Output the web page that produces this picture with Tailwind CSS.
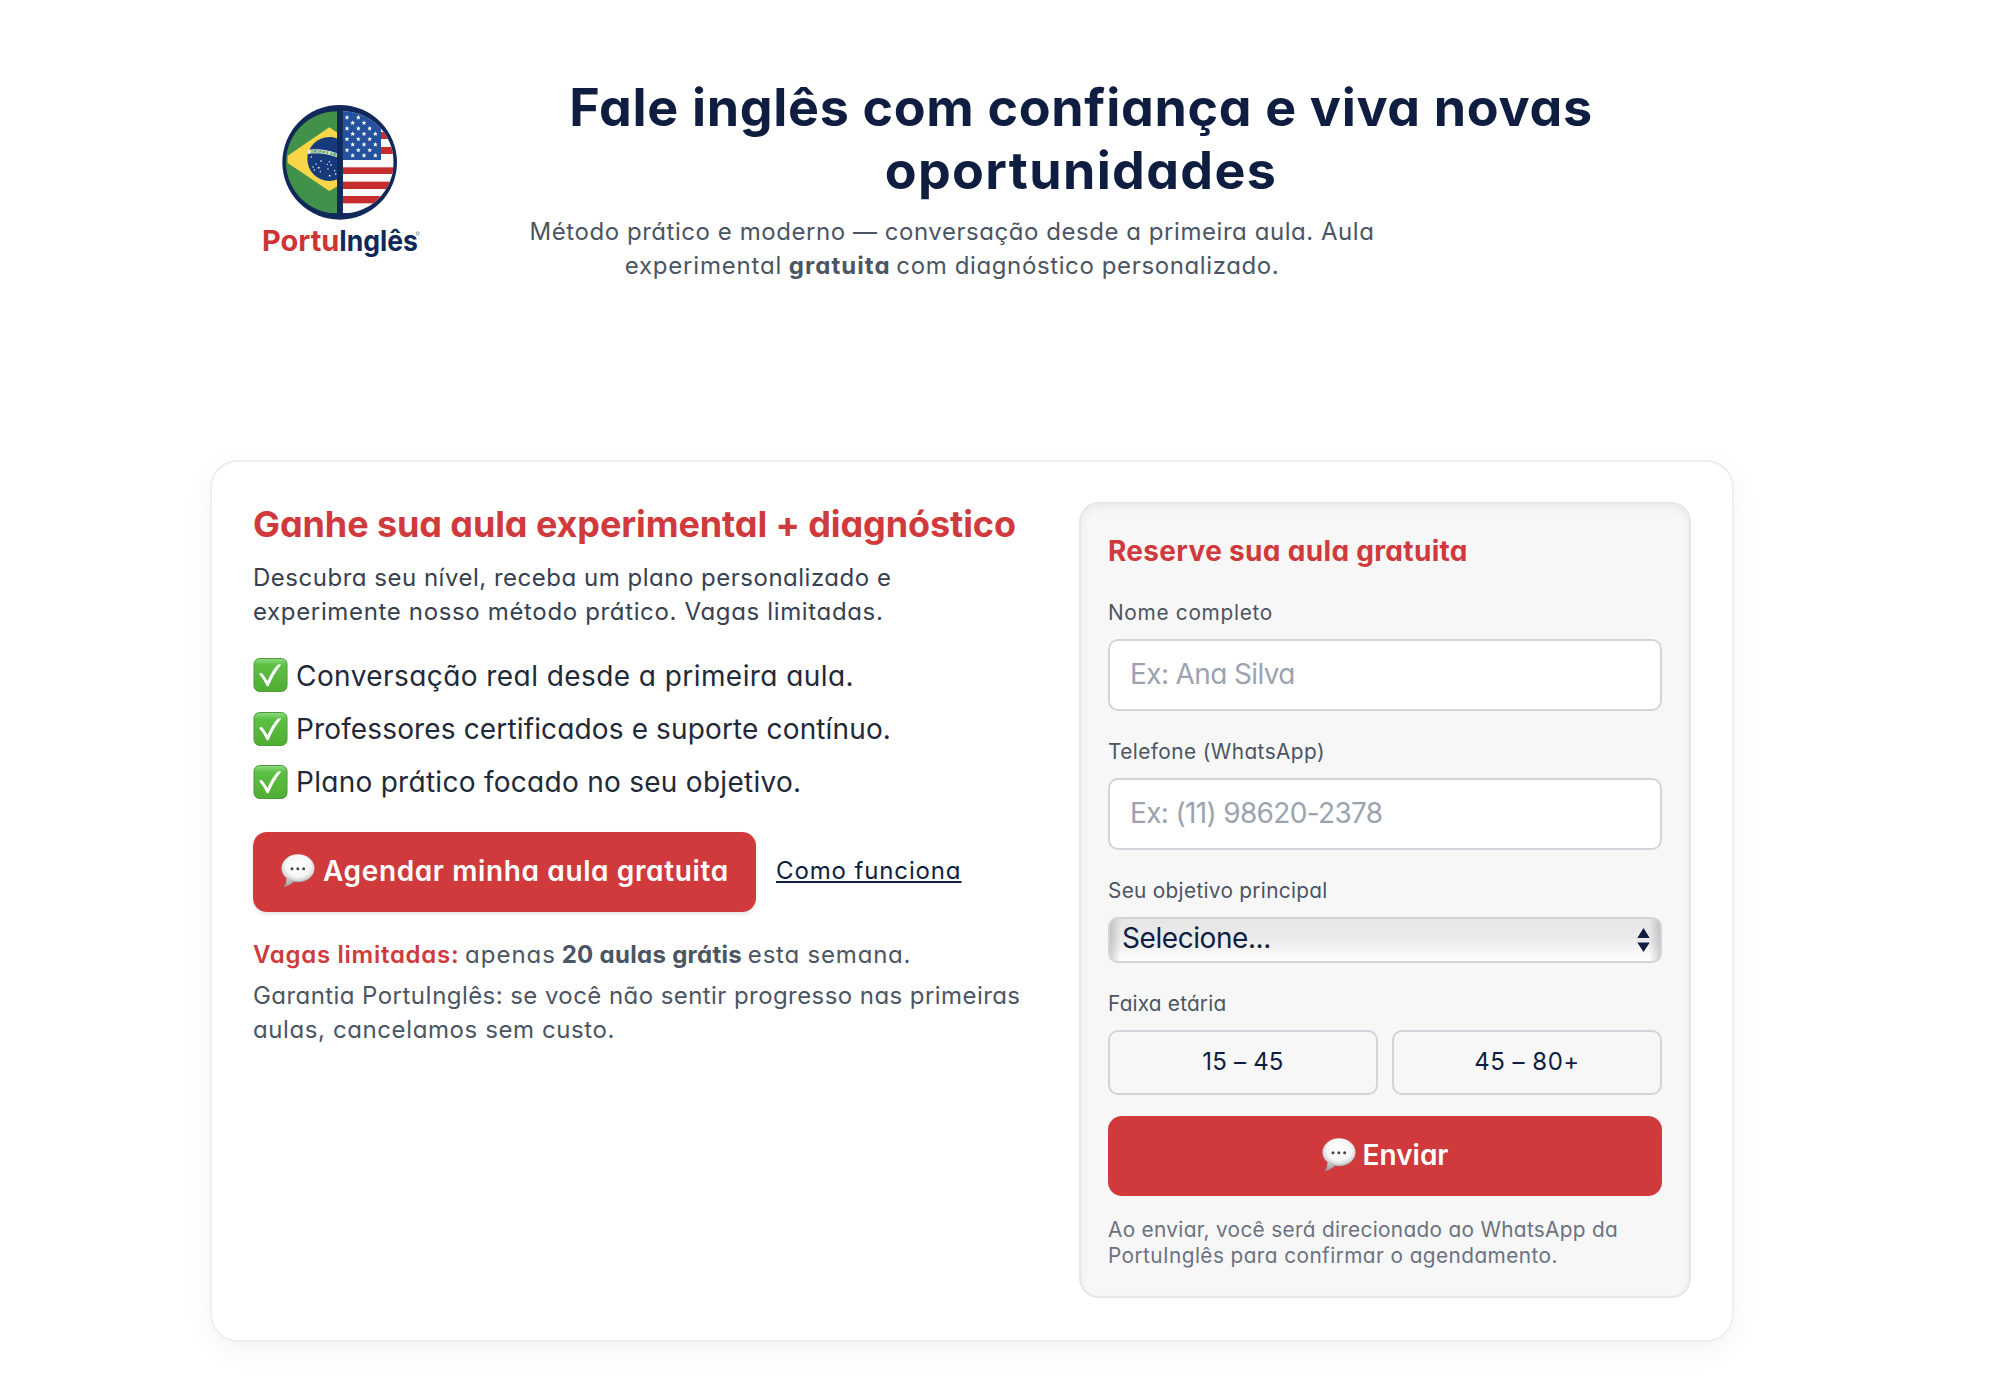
<!DOCTYPE html>
<html lang="pt-BR">
<head>
<meta charset="utf-8">
<title>PortuInglês</title>
<script src="https://cdn.jsdelivr.net/npm/@tailwindcss/browser@4"></script>
</head>
<body class="min-h-[1382px] bg-white font-[Inter,sans-serif] text-[#0f1e40] [font-feature-settings:'cv11'] overflow-hidden">

<svg class="absolute w-0 h-0" aria-hidden="true">
  <defs>
    <linearGradient id="g-check" x1="0" y1="0" x2="0" y2="1"><stop offset="0" stop-color="#8fdc85"/><stop offset=".2" stop-color="#5cc043"/><stop offset="1" stop-color="#4fae33"/></linearGradient>
    <radialGradient id="g-bubble" cx=".5" cy=".42" r=".58"><stop offset="0" stop-color="#fff"/><stop offset=".65" stop-color="#f6f6f6"/><stop offset=".88" stop-color="#d6d6d6"/><stop offset="1" stop-color="#9c9c9c"/></radialGradient>
    <linearGradient id="g-tail" x1="0" y1="0" x2="0" y2="1"><stop offset="0" stop-color="#d8d8d8"/><stop offset="1" stop-color="#8d8d8d"/></linearGradient>
    <symbol id="check" viewBox="0 0 102 102">
      <rect x="1.5" y="1.5" width="99" height="99" rx="17" fill="url(#g-check)" stroke="#4a9a35" stroke-width="3"/>
      <path d="M17 48q5-5 10-1 9 11 15 22Q54 40 72 20q6-2 11 0Q60 48 45 85h-5Q31 65 17 48Z" fill="#fff"/>
    </symbol>
    <symbol id="bubble" viewBox="0 0 102 102">
      <path d="M17 72q0 16-9 28q20-4 31-18z" fill="url(#g-tail)"/>
      <ellipse cx="51" cy="43" rx="49.500" ry="42" fill="url(#g-bubble)"/>
      <g fill="#444"><circle cx="33" cy="44" r="4.500"/><circle cx="50.500" cy="44" r="4.500"/><circle cx="68" cy="44" r="4.500"/></g>
    </symbol>
    <symbol id="star" viewBox="0 0 14 14"><path d="M7 0l2 4.700 5 .4-3.800 3.300L11.400 14 7 11 2.600 14l1.200-5.600L0 5.100l5-.4z" fill="#fff"/></symbol>
    <clipPath id="c-left"><path d="M291 64A153 153 0 0 0 291 370Z"/></clipPath>
    <clipPath id="c-right"><path d="M308 64A153 153 0 0 1 308 370Z"/></clipPath>
  </defs>
</svg>

<header class="flex h-[460px] items-start pl-[240px]">
  <svg class="mt-[90px] h-[180px] w-[200px] shrink-0" viewBox="0 0 600 540" role="img" aria-label="PortuInglês">
    <circle cx="299" cy="217" r="172" fill="#10295a"/>
    <g clip-path="url(#c-left)">
      <rect x="130" y="50" width="161" height="340" fill="#42914a"/>
      <path d="M268 112l120 80v40L268 303 143 219v-22z" fill="#f8d648"/>
      <circle cx="268" cy="207" r="66" fill="#173a7c"/>
      <path d="M205 179q45-5 90 12v12q-44-17-92-12z" fill="#f4f6f4"/>
      <path id="motto" d="M211 189q40-3 84 12" fill="none"/>
      <text font-family="Inter" font-size="12" font-weight="800" fill="#42914a"><textPath href="#motto">ORDEM E AMA</textPath></text>
      <g fill="#fff"><circle cx="214" cy="201" r="2"/><circle cx="243" cy="213" r="2.500"/><circle cx="228" cy="222" r="2"/><circle cx="219" cy="231" r="2"/><circle cx="236" cy="233" r="2.500"/><circle cx="241" cy="245" r="2"/><circle cx="262" cy="223" r="2"/><circle cx="268" cy="215" r="2"/><circle cx="273" cy="225" r="2.500"/><circle cx="264" cy="237" r="2"/><circle cx="269" cy="257" r="2.500"/><circle cx="284" cy="242" r="2"/><circle cx="287" cy="252" r="2.500"/><circle cx="223" cy="240" r="2"/></g>
    </g>
    <g clip-path="url(#c-right)">
      <rect x="308" y="50" width="160" height="340" fill="#fbfafa"/>
      <g fill="#c62b2d"><rect x="400" y="126" width="70" height="21"/><rect x="400" y="171" width="70" height="21"/><rect x="308" y="232" width="160" height="20"/><rect x="308" y="275" width="160" height="22"/><rect x="308" y="318" width="160" height="22"/></g>
      <rect x="308" y="50" width="115" height="160" fill="#24529f"/>
      <use href="#star" x="314" y="75" width="14" height="14"/><use href="#star" x="348" y="75" width="14" height="14"/>
      <use href="#star" x="331" y="91" width="14" height="14"/><use href="#star" x="365" y="91" width="14" height="14"/>
      <use href="#star" x="314" y="108" width="14" height="14"/><use href="#star" x="348" y="108" width="14" height="14"/><use href="#star" x="382" y="108" width="14" height="14"/>
      <use href="#star" x="331" y="124" width="14" height="14"/><use href="#star" x="365" y="124" width="14" height="14"/><use href="#star" x="399" y="124" width="14" height="14"/>
      <use href="#star" x="314" y="140" width="14" height="14"/><use href="#star" x="348" y="140" width="14" height="14"/><use href="#star" x="382" y="140" width="14" height="14"/>
      <use href="#star" x="331" y="156" width="14" height="14"/><use href="#star" x="365" y="156" width="14" height="14"/><use href="#star" x="399" y="156" width="14" height="14"/>
      <use href="#star" x="314" y="173" width="14" height="14"/><use href="#star" x="348" y="173" width="14" height="14"/><use href="#star" x="382" y="173" width="14" height="14"/>
      <use href="#star" x="331" y="189" width="14" height="14"/><use href="#star" x="365" y="189" width="14" height="14"/><use href="#star" x="399" y="189" width="14" height="14"/>
    </g>
    <text y="482" font-family="Inter" font-size="87" font-weight="700"><tspan x="66" fill="#cf3336" textLength="232" lengthAdjust="spacingAndGlyphs">Portu</tspan><tspan x="298" fill="#10295a" textLength="236" lengthAdjust="spacingAndGlyphs">Inglês</tspan></text>
    <circle cx="533" cy="430" r="4.500" fill="none" stroke="#555f78" stroke-width="2"/>
  </svg>
  <div class="-ml-[15px] w-[1312px] pt-[77px]">
    <h1 class="text-center text-[52px] leading-[62.500px] font-bold whitespace-nowrap"><span class="tracking-[0.68px]">Fale inglês com confiança e viva novas</span><br><span class="tracking-[1.34px]">oportunidades</span></h1>
    <p class="mt-[13px] w-[1054px] text-center text-[24px] leading-[34px] whitespace-nowrap text-[#4b5563]"><span class="tracking-[0.55px]">Método prático e moderno — conversação desde a primeira aula. Aula</span><br><span class="tracking-[0.8px]">experimental</span> <strong class="tracking-[1.05px]">gratuita</strong> <span class="-ml-px tracking-[0.62px]">com diagnóstico personalizado.</span></p>
  </div>
</header>

<main class="ml-[210px] flex h-[882px] w-[1524px] items-start justify-between rounded-[28px] border-2 border-[#eeeeee] bg-white px-[41px] pt-[40px] shadow-[0_8px_30px_rgba(0,0,0,0.05)]">
  <section class="whitespace-nowrap pt-px">
    <h2 class="text-[36px] leading-[42px] font-bold tracking-[-0.1px] text-[#d03a3c]">Ganhe sua aula experimental + diagnóstico</h2>
    <p class="mt-4 text-[24px] leading-[34px] text-[#374151]"><span class="tracking-[0.51px]">Descubra seu nível, receba um plano personalizado e</span><br><span class="tracking-[0.65px]">experimente nosso método prático. Vagas limitadas.</span></p>
    <ul class="mt-[25px] flex flex-col gap-3 text-[28px] leading-[41.600px] text-[#1f2937]">
      <li class="flex h-[41.600px] items-center gap-[8px]"><svg class="mt-px h-[34px] w-[35px]"><use href="#check"/></svg><span class="pt-[3px] tracking-[0.43px]">Conversação real desde a primeira aula.</span></li>
      <li class="flex h-[41.600px] items-center gap-[8px]"><svg class="mt-px h-[34px] w-[35px]"><use href="#check"/></svg><span class="pt-[3px] tracking-[0.14px]">Professores certificados e suporte contínuo.</span></li>
      <li class="flex h-[41.600px] items-center gap-[8px]"><svg class="mt-px h-[34px] w-[35px]"><use href="#check"/></svg><span class="pt-[2px] tracking-[0.28px]">Plano prático focado no seu objetivo.</span></li>
    </ul>
    <div class="mt-[29px] flex items-center gap-[20px]">
      <a class="flex h-[80px] w-[503px] items-center gap-[8px] rounded-[14px] bg-[#d03a3c] pb-[2px] pl-[28px] text-[28px] font-semibold text-white shadow-[0_2px_4px_rgba(0,0,0,0.12)]"><svg class="h-[34px] w-[34px] shrink-0"><use href="#bubble"/></svg><span class="tracking-[0.62px]">Agendar minha aula gratuita</span></a>
      <a class="pb-[2px] text-[24px] leading-[34px] tracking-[0.87px] underline decoration-2 underline-offset-2">Como funciona</a>
    </div>
    <p class="mt-[26px] text-[24px] leading-[34px] text-[#4b5563]"><span class="font-semibold tracking-[0.72px] text-[#d03a3c]">Vagas limitadas:</span> <span class="-ml-px tracking-[1px]">apenas</span> <strong class="-ml-px tracking-[0.29px]">20 aulas grátis</strong> <span class="-ml-px tracking-[0.8px]">esta semana.</span></p>
    <p class="mt-[7px] text-[24px] leading-[34px] text-[#4b5563]"><span class="tracking-[0.43px]">Garantia PortuInglês: se você não sentir progresso nas primeiras</span><br><span class="tracking-[0.6px]">aulas, cancelamos sem custo.</span></p>
  </section>

  <form class="flex h-[796px] w-[612px] flex-col whitespace-nowrap rounded-[20px] border-2 border-[#e5e7eb] bg-[#f7f7f7] px-[27px] pt-[30px] shadow-[inset_0_4px_8px_rgba(0,0,0,0.05)]">
    <h3 class="text-[28px] leading-[34px] font-bold tracking-[0.32px] text-[#d03a3c]">Reserve sua aula gratuita</h3>
    <label class="mt-[31px] text-[20.800px] leading-[28px] tracking-[0.7px] text-[#4b5563]">Nome completo</label>
    <input class="mt-[12px] h-[72px] rounded-[10px] border-2 border-[#d1d5db] bg-white px-[20px] pb-[2px] text-[28px] tracking-[-0.62px] placeholder:text-[#9ca3af]" placeholder="Ex: Ana Silva">
    <label class="mt-[27px] text-[20.800px] leading-[28px] tracking-[0.43px] text-[#4b5563]">Telefone (WhatsApp)</label>
    <input class="mt-[12px] h-[72px] rounded-[10px] border-2 border-[#d1d5db] bg-white px-[20px] pb-[2px] text-[28px] tracking-[-0.66px] placeholder:text-[#9ca3af]" placeholder="Ex: (11) 98620-2378">
    <label class="mt-[27px] text-[20.800px] leading-[28px] tracking-[0.3px] text-[#4b5563]">Seu objetivo principal</label>
    <div class="mt-[12px] flex h-[46px] items-center justify-between rounded-[10px] border-2 border-[#d1d5db] bg-[linear-gradient(to_right,rgba(0,0,0,0.16),transparent_11px,transparent_calc(100%-11px),rgba(0,0,0,0.16)),linear-gradient(to_bottom,#e6e6e6,#ebebeb_50%,#fff)] pr-[10px] pl-[12px] text-[28px] leading-[36px]">
      <span class="pb-[4px] tracking-[-0.43px]">Selecione...</span>
      <svg class="h-[24px] w-[13px]" viewBox="0 0 13 24" fill="#0f1e40"><path d="M6.500 0L12.700 10H.3zM6.500 24L.3 14.500h12.400z"/></svg>
    </div>
    <label class="mt-[27px] text-[20.800px] leading-[28px] tracking-[0.19px] text-[#4b5563]">Faixa etária</label>
    <div class="mt-[12px] grid grid-cols-2 gap-[14px] text-[24px]">
      <button type="button" class="h-[65px] rounded-[10px] border-2 border-[#d1d5db] pb-[2px] tracking-[0.19px]">15 – 45</button>
      <button type="button" class="h-[65px] rounded-[10px] border-2 border-[#d1d5db] pb-[2px] tracking-[0.49px]">45 – 80+</button>
    </div>
    <button type="button" class="mt-[21px] flex h-[80px] items-center justify-center gap-[7px] rounded-[14px] bg-[#d03a3c] pb-[3px] text-[28px] font-semibold text-white"><svg class="h-[34px] w-[34px]"><use href="#bubble"/></svg>Enviar</button>
    <p class="mt-[21px] text-[20.800px] leading-[26px] text-[#6b7280]"><span class="tracking-[0.31px]">Ao enviar, você será direcionado ao WhatsApp da</span><br><span class="tracking-[0.42px]">PortuInglês para confirmar o agendamento.</span></p>
  </form>
</main>
</body>
</html>
